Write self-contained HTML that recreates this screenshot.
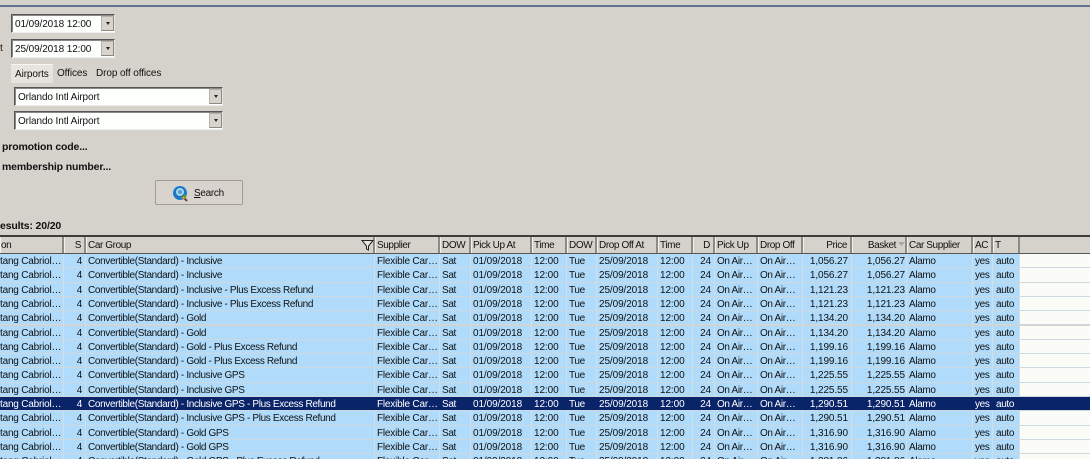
<!DOCTYPE html>
<html><head><meta charset="utf-8">
<style>
html,body{margin:0;padding:0;width:1090px;height:459px;overflow:hidden}
#w{position:absolute;left:0;top:0;width:1090px;height:459px;overflow:hidden;background:#d4d2ca;font:10px/14px "Liberation Sans",sans-serif;letter-spacing:-.1px;color:#111;filter:blur(.25px)}
.a{position:absolute;white-space:nowrap}
.field{position:absolute;background:#fdfffd;border:1px solid;border-color:#555 #e6e6e0 #eee #555;box-shadow:inset 1px 1px 0 #888;box-sizing:border-box;height:19px}
.field span{position:absolute;left:3px;top:3px;white-space:nowrap}
.drop{position:absolute;background:#d8d4cc;border:1px solid #b5b2ab;border-right-color:#8a8880;border-bottom-color:#8a8880;box-sizing:border-box;width:13px;height:15px;top:1px;right:0}
.drop:after{content:"";position:absolute;left:4px;top:5px;border:2.500px solid transparent;border-top:3px solid #222;border-bottom:0}
.b{font-weight:bold;font-size:10.5px;letter-spacing:-.15px}
.grid{position:absolute;left:0;width:1090px;display:grid;grid-template-columns:64px 22px 289px 65px 31px 61px 35px 30px 61px 35px 22px 43px 45px 49px 55px 66px 20px 27px 70px;height:14.3px;letter-spacing:-.35px}
.grid>*{font-style:normal;box-sizing:border-box;overflow:hidden;white-space:nowrap;padding-left:2px;line-height:16px;height:100%}
.r{background:#b0dbfa;border-bottom:1px solid #cdd9df;box-sizing:border-box}
.r>*{border-right:1px solid #cfe0ea}
.r>*:last-child{background:#fbfcf8;border:0}
.r>:nth-child(1){padding-left:0;letter-spacing:-.2px}
.r>:nth-child(4){letter-spacing:-.2px}
.r>:nth-child(2),.r>:nth-child(11),.r>:nth-child(14){text-align:right;padding-right:3px}
.r>:nth-child(15){text-align:right;padding-right:1px}
.r>:nth-child(6),.r>:nth-child(7),.r>:nth-child(9),.r>:nth-child(10),.r>:nth-child(11),.r>:nth-child(14),.r>:nth-child(15){letter-spacing:-.1px}
.r>:nth-child(18){padding-left:3px}
.s{background:#0a246a;color:#fff}
.s>*{border-right-color:#0a246a}
.r.s>*:last-child{background:#0a246a}
.h{top:237px;height:16px;background:#d4d2ca;letter-spacing:-.4px}
.h>*{border-right:2px solid #8e8b84;border-left:1px solid #f2f0ec;line-height:18px;padding-left:1px}
.h>:nth-child(2),.h>:nth-child(11),.h>:nth-child(14){text-align:right;padding-right:3px}
.h>:nth-child(15){text-align:right;padding-right:9px}
.h>:nth-child(1){padding-left:0}
.h>:last-child{border:0}
</style></head><body><div id="w">
<div class="a" style="left:0;top:5px;width:1090px;height:2px;background:#5f7393"></div>

<div class="field" style="left:11px;top:14px;width:104px"><span>01/09/2018 12:00</span><div class="drop"></div></div>
<div class="a" style="left:0;top:42px">t</div>
<div class="field" style="left:11px;top:39px;width:104px"><span>25/09/2018 12:00</span><div class="drop"></div></div>

<div class="a" style="left:11px;top:64px;width:42px;height:19px;background:#e6e4de;border-top:1px solid #f5f5f2;box-sizing:border-box;padding:3px 0 0 4px">Airports</div>
<div class="a" style="left:57px;top:67px">Offices</div>
<div class="a" style="left:96px;top:67px">Drop off offices</div>

<div class="field" style="left:14px;top:87px;width:209px"><span>Orlando Intl Airport</span><div class="drop"></div></div>
<div class="field" style="left:14px;top:111px;width:209px"><span>Orlando Intl Airport</span><div class="drop"></div></div>

<div class="a b" style="left:2px;top:140px">promotion code...</div>
<div class="a b" style="left:2px;top:160px">membership number...</div>

<div class="a" style="left:155px;top:180px;width:88px;height:25px;background:#d8d4cd;border:1px solid #a09d96;border-radius:2px;box-sizing:border-box"></div>
<svg class="a" style="left:172px;top:185px" width="18" height="18" viewBox="0 0 18 18"><circle cx="8" cy="8" r="7" fill="#1d78c8"/><circle cx="8" cy="7" r="4" fill="#a8d8e8"/><circle cx="8" cy="7" r="2" fill="#4f9fd0"/><path d="M10 11l5 5" stroke="#6a4a20" stroke-width="2"/><path d="M9 13l3-2 1 3z" fill="#d8b030"/><path d="M12 10l2 2" stroke="#50a040" stroke-width="2"/></svg>
<div class="a" style="left:194px;top:187px;letter-spacing:-.3px"><u>S</u>earch</div>

<div class="a b" style="left:0;top:219px">esults: 20/20</div>

<div class="a" style="left:0;top:235px;width:1090px;height:2px;background:#3d3c39"></div>
<div class="grid h"><i>on</i><i>S</i><i>Car Group</i><i>Supplier</i><i>DOW</i><i>Pick Up At</i><i>Time</i><i>DOW</i><i>Drop Off At</i><i>Time</i><i>D</i><i>Pick Up</i><i>Drop Off</i><i>Price</i><i>Basket</i><i>Car Supplier</i><i>AC</i><i>T</i><i></i></div>
<svg class="a" style="left:361px;top:240px" width="13" height="11" viewBox="0 0 13 11"><path d="M1 .5h11L7.500 6v4L5.500 9V6z" fill="#e8e6e0" stroke="#222"/></svg>
<svg class="a" style="left:898px;top:242px" width="8" height="5"><path d="M0 0h7L3.500 4z" fill="#a8a6a0"/></svg>
<div class="a" style="left:0;top:253px;width:1090px;height:1px;background:#555"></div>

<div class="grid r" style="top:254px"><i>tang Cabriol…</i><i>4</i><i>Convertible(Standard) - Inclusive</i><i>Flexible Car…</i><i>Sat</i><i>01/09/2018</i><i>12:00</i><i>Tue</i><i>25/09/2018</i><i>12:00</i><i>24</i><i>On Air…</i><i>On Air…</i><i>1,056.27</i><i>1,056.27</i><i>Alamo</i><i>yes</i><i>auto</i><i></i></div>
<div class="grid r" style="top:268.300px"><i>tang Cabriol…</i><i>4</i><i>Convertible(Standard) - Inclusive</i><i>Flexible Car…</i><i>Sat</i><i>01/09/2018</i><i>12:00</i><i>Tue</i><i>25/09/2018</i><i>12:00</i><i>24</i><i>On Air…</i><i>On Air…</i><i>1,056.27</i><i>1,056.27</i><i>Alamo</i><i>yes</i><i>auto</i><i></i></div>
<div class="grid r" style="top:282.600px"><i>tang Cabriol…</i><i>4</i><i>Convertible(Standard) - Inclusive - Plus Excess Refund</i><i>Flexible Car…</i><i>Sat</i><i>01/09/2018</i><i>12:00</i><i>Tue</i><i>25/09/2018</i><i>12:00</i><i>24</i><i>On Air…</i><i>On Air…</i><i>1,121.23</i><i>1,121.23</i><i>Alamo</i><i>yes</i><i>auto</i><i></i></div>
<div class="grid r" style="top:296.900px"><i>tang Cabriol…</i><i>4</i><i>Convertible(Standard) - Inclusive - Plus Excess Refund</i><i>Flexible Car…</i><i>Sat</i><i>01/09/2018</i><i>12:00</i><i>Tue</i><i>25/09/2018</i><i>12:00</i><i>24</i><i>On Air…</i><i>On Air…</i><i>1,121.23</i><i>1,121.23</i><i>Alamo</i><i>yes</i><i>auto</i><i></i></div>
<div class="grid r" style="top:311.200px"><i>tang Cabriol…</i><i>4</i><i>Convertible(Standard) - Gold</i><i>Flexible Car…</i><i>Sat</i><i>01/09/2018</i><i>12:00</i><i>Tue</i><i>25/09/2018</i><i>12:00</i><i>24</i><i>On Air…</i><i>On Air…</i><i>1,134.20</i><i>1,134.20</i><i>Alamo</i><i>yes</i><i>auto</i><i></i></div>
<div class="grid r" style="top:325.500px"><i>tang Cabriol…</i><i>4</i><i>Convertible(Standard) - Gold</i><i>Flexible Car…</i><i>Sat</i><i>01/09/2018</i><i>12:00</i><i>Tue</i><i>25/09/2018</i><i>12:00</i><i>24</i><i>On Air…</i><i>On Air…</i><i>1,134.20</i><i>1,134.20</i><i>Alamo</i><i>yes</i><i>auto</i><i></i></div>
<div class="grid r" style="top:339.800px"><i>tang Cabriol…</i><i>4</i><i>Convertible(Standard) - Gold - Plus Excess Refund</i><i>Flexible Car…</i><i>Sat</i><i>01/09/2018</i><i>12:00</i><i>Tue</i><i>25/09/2018</i><i>12:00</i><i>24</i><i>On Air…</i><i>On Air…</i><i>1,199.16</i><i>1,199.16</i><i>Alamo</i><i>yes</i><i>auto</i><i></i></div>
<div class="grid r" style="top:354.100px"><i>tang Cabriol…</i><i>4</i><i>Convertible(Standard) - Gold - Plus Excess Refund</i><i>Flexible Car…</i><i>Sat</i><i>01/09/2018</i><i>12:00</i><i>Tue</i><i>25/09/2018</i><i>12:00</i><i>24</i><i>On Air…</i><i>On Air…</i><i>1,199.16</i><i>1,199.16</i><i>Alamo</i><i>yes</i><i>auto</i><i></i></div>
<div class="grid r" style="top:368.400px"><i>tang Cabriol…</i><i>4</i><i>Convertible(Standard) - Inclusive GPS</i><i>Flexible Car…</i><i>Sat</i><i>01/09/2018</i><i>12:00</i><i>Tue</i><i>25/09/2018</i><i>12:00</i><i>24</i><i>On Air…</i><i>On Air…</i><i>1,225.55</i><i>1,225.55</i><i>Alamo</i><i>yes</i><i>auto</i><i></i></div>
<div class="grid r" style="top:382.700px"><i>tang Cabriol…</i><i>4</i><i>Convertible(Standard) - Inclusive GPS</i><i>Flexible Car…</i><i>Sat</i><i>01/09/2018</i><i>12:00</i><i>Tue</i><i>25/09/2018</i><i>12:00</i><i>24</i><i>On Air…</i><i>On Air…</i><i>1,225.55</i><i>1,225.55</i><i>Alamo</i><i>yes</i><i>auto</i><i></i></div>
<div class="grid r s" style="top:397px"><i>tang Cabriol…</i><i>4</i><i>Convertible(Standard) - Inclusive GPS - Plus Excess Refund</i><i>Flexible Car…</i><i>Sat</i><i>01/09/2018</i><i>12:00</i><i>Tue</i><i>25/09/2018</i><i>12:00</i><i>24</i><i>On Air…</i><i>On Air…</i><i>1,290.51</i><i>1,290.51</i><i>Alamo</i><i>yes</i><i>auto</i><i></i></div>
<div class="grid r" style="top:411.300px"><i>tang Cabriol…</i><i>4</i><i>Convertible(Standard) - Inclusive GPS - Plus Excess Refund</i><i>Flexible Car…</i><i>Sat</i><i>01/09/2018</i><i>12:00</i><i>Tue</i><i>25/09/2018</i><i>12:00</i><i>24</i><i>On Air…</i><i>On Air…</i><i>1,290.51</i><i>1,290.51</i><i>Alamo</i><i>yes</i><i>auto</i><i></i></div>
<div class="grid r" style="top:425.600px"><i>tang Cabriol…</i><i>4</i><i>Convertible(Standard) - Gold GPS</i><i>Flexible Car…</i><i>Sat</i><i>01/09/2018</i><i>12:00</i><i>Tue</i><i>25/09/2018</i><i>12:00</i><i>24</i><i>On Air…</i><i>On Air…</i><i>1,316.90</i><i>1,316.90</i><i>Alamo</i><i>yes</i><i>auto</i><i></i></div>
<div class="grid r" style="top:439.900px"><i>tang Cabriol…</i><i>4</i><i>Convertible(Standard) - Gold GPS</i><i>Flexible Car…</i><i>Sat</i><i>01/09/2018</i><i>12:00</i><i>Tue</i><i>25/09/2018</i><i>12:00</i><i>24</i><i>On Air…</i><i>On Air…</i><i>1,316.90</i><i>1,316.90</i><i>Alamo</i><i>yes</i><i>auto</i><i></i></div>
<div class="grid r" style="top:454.200px"><i>tang Cabriol…</i><i>4</i><i>Convertible(Standard) - Gold GPS - Plus Excess Refund</i><i>Flexible Car…</i><i>Sat</i><i>01/09/2018</i><i>12:00</i><i>Tue</i><i>25/09/2018</i><i>12:00</i><i>24</i><i>On Air…</i><i>On Air…</i><i>1,381.86</i><i>1,381.86</i><i>Alamo</i><i>yes</i><i>auto</i><i></i></div>
</div></body></html>
